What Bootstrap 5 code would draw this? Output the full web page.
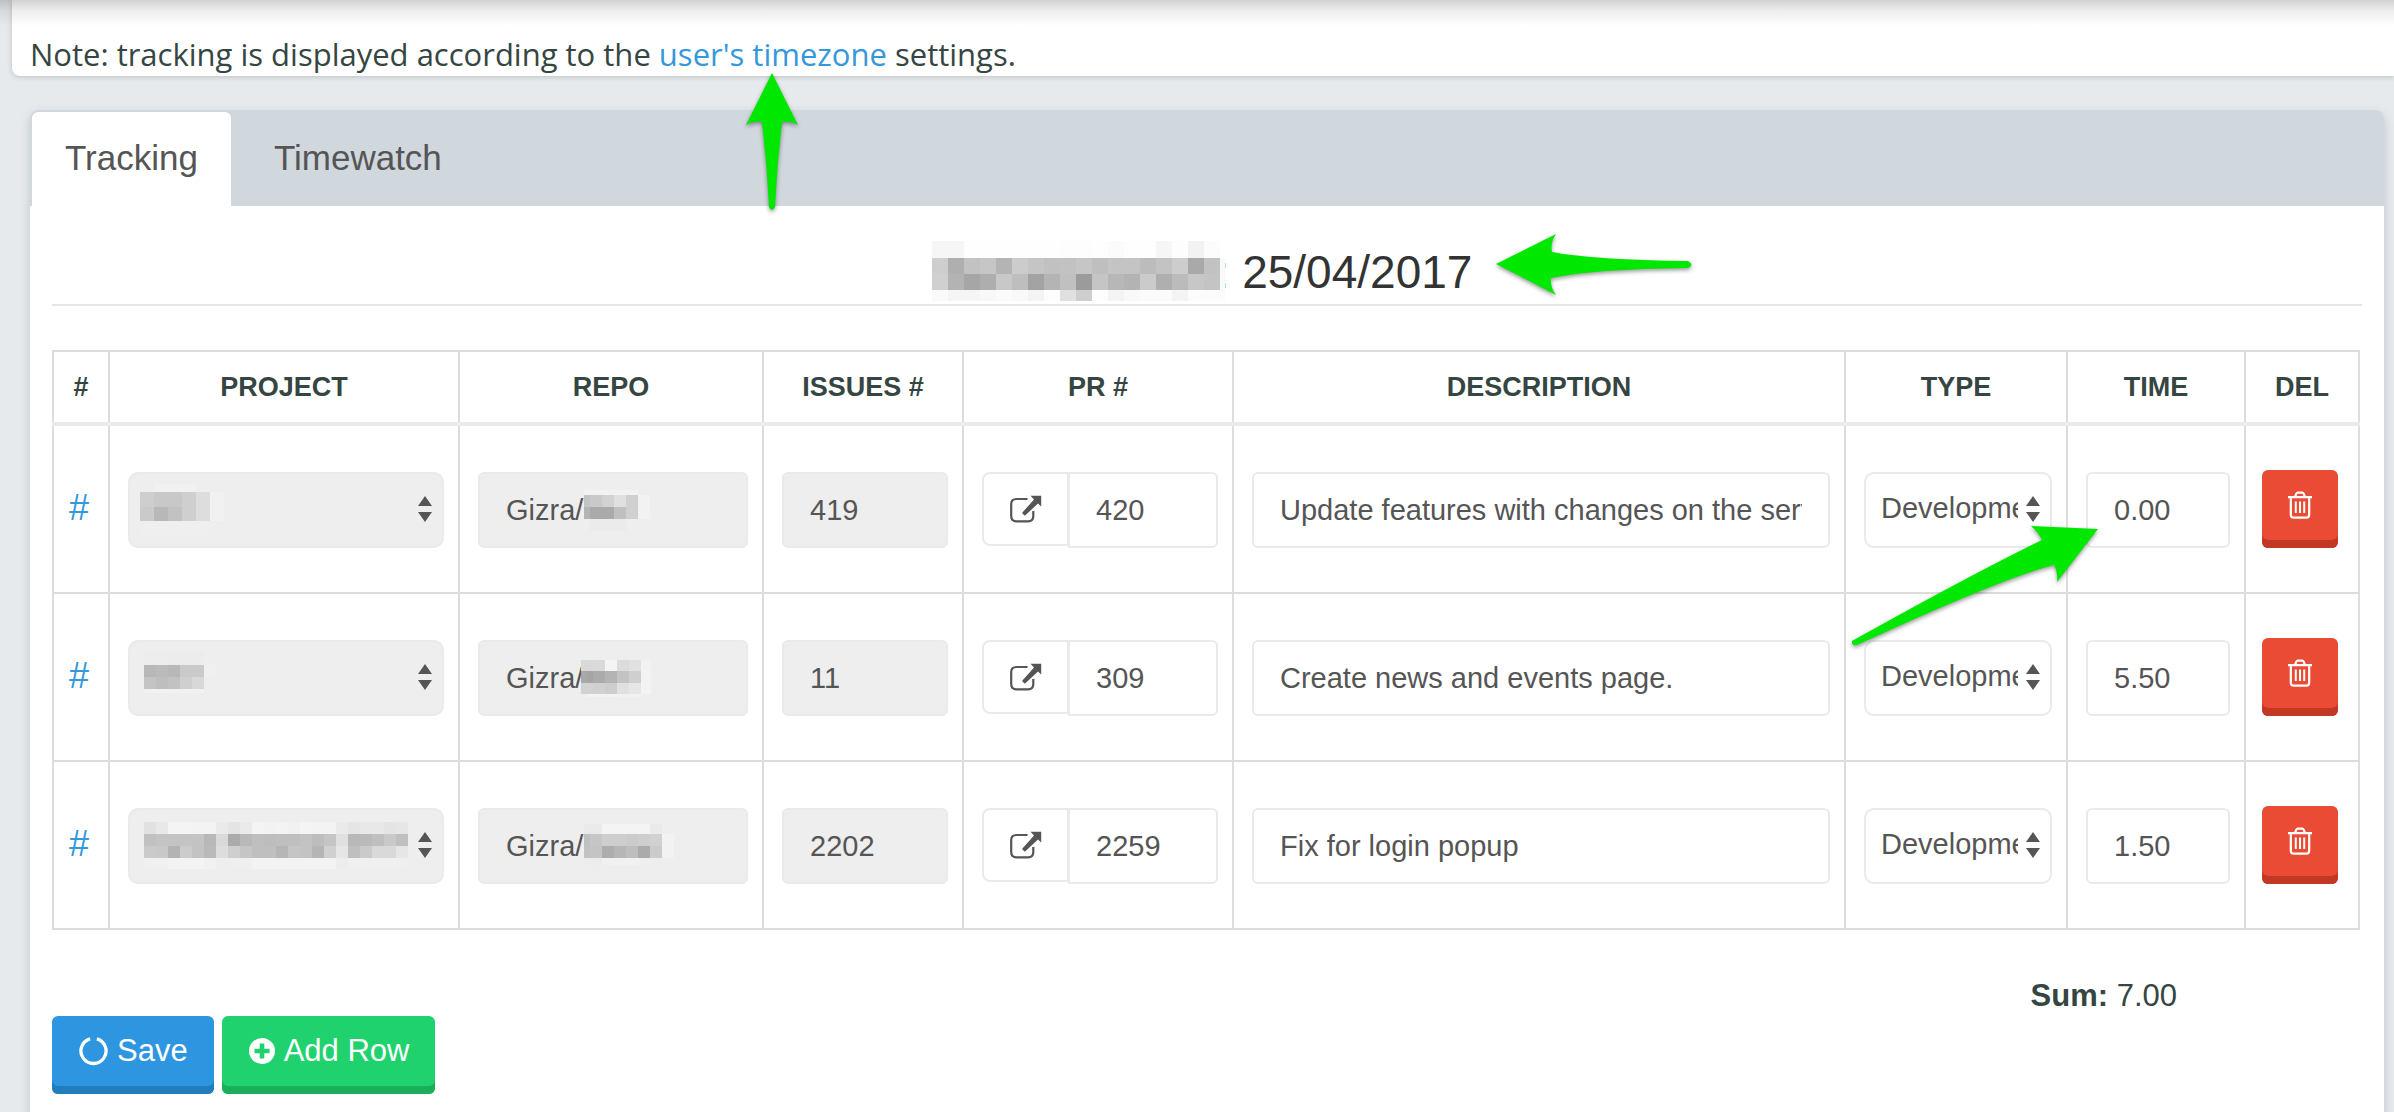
<!DOCTYPE html>
<html lang="en">
<head>
<meta charset="utf-8">
<meta name="viewport" content="width=device-width, initial-scale=1">
<title>Tracking</title>
<link rel="stylesheet" href="https://cdn.jsdelivr.net/npm/bootstrap@5.3.0/dist/css/bootstrap.min.css">
<style>
  :root { --line: #ddd; --soft: #e8eaec; --ink: #354642; }
  body { background: #e6eaed; color: var(--ink); font-family: "Liberation Sans", Arial, sans-serif; font-size: 31px; line-height: 32px; position: relative; overflow-x: hidden; }
  body::before { content: ""; position: absolute; inset: 0 0 auto; height: 26px; background: linear-gradient(rgba(0,0,0,.18), rgba(0,0,0,.07) 40%, transparent); pointer-events: none; z-index: 3; }
  a { color: #3498db; text-decoration: none; }
  .note-bar { background: #fff; margin-left: 12px; padding: 34px 18px 0; height: 76px; border-bottom-left-radius: 8px; box-shadow: 0 1px 5px rgba(60,70,80,.25); font-family: "Open Sans", sans-serif; line-height: 40px; }
  .note-bar p { margin: 0; }
  .panel { margin: 34px 10px 0 30px; border-radius: 8px 8px 0 0; background: #fff; box-shadow: 0 4px 10px rgba(90,105,130,.28); }
  .tab-strip { background: #d0d7dd; border: 0; border-radius: 8px 8px 0 0; padding: 2px 2px 0; gap: 10px; }
  .tab-strip .nav-link { border: 0; margin: 0; border-radius: 6px 6px 0 0; padding: 26px 33px 28px; font-size: 35px; line-height: 40px; color: #555; }
  .tab-strip .nav-link.active { background: #fff; color: #555; }
  .panel-main { padding: 40px 22px 22px; }
  .day-title { font-size: 46px; line-height: 52px; font-weight: 400; color: #333; border-bottom: 2px solid #e5e5e5; padding-bottom: 6px; margin-bottom: 44px; }
  .day-title .mosaic { position: relative; top: -5px; margin: -16px -8px -16px -10px; z-index: 1; }
  .mosaic { display: inline-block; vertical-align: middle; line-height: 0; }
  .mosaic svg { display: block; shape-rendering: crispEdges; }
  .field { position: relative; }
  .field .mosaic { position: absolute; pointer-events: none; }
  .at-p1 { left: 12px; top: 12px; } .at-p2 { left: 16px; top: 13px; } .at-p3 { left: 16px; top: 14px; }
  .at-r1 { left: 106px; top: 18px; } .at-r2 { left: 103px; top: 20px; } .at-r3 { left: 106px; top: 16px; }

  .track { table-layout: fixed; border-collapse: collapse; width: calc(100% - 2px); margin: 0; }
  .track th, .track td { border: 2px solid var(--line); }
  .track th { height: 73px; padding: 0; font-size: 27px; line-height: 30px; color: var(--ink); text-align: center; vertical-align: middle; text-transform: uppercase; }
  .track thead th { border-bottom: 4px solid var(--soft); }
  .track tbody td { padding: 46px 14px 44px 18px; vertical-align: top; }
  .track tbody td.cell-id { padding: 62px 4px 0 0; text-align: center; font-size: 36px; line-height: 40px; }
  .track tbody td.cell-del { padding: 44px 16px; }
  .track .form-control, .track .form-select { height: 76px; border: 2px solid var(--soft); border-radius: 6px; padding: 0 26px; font-size: 29px; line-height: 32px; color: #555; background-color: #fff; }
  .track .form-select { border-radius: 10px; padding: 0 32px 4px 15px; text-overflow: clip; background-size: 14px 26px; background-position: right 10px top 22px;
    background-image: url("data:image/svg+xml,%3Csvg xmlns='http://www.w3.org/2000/svg' viewBox='0 0 14 26'%3E%3Cpath fill='%23555' d='M7 0l7 10H0zM7 26l7-10H0z'/%3E%3C/svg%3E"); }
  .track .form-control:disabled, .track .form-select:disabled { background-color: #eee; opacity: 1; }
  .pr-group { align-items: flex-start; }
  .pr-group .btn { height: 74px; width: 87px; flex: none; padding: 0; border: 2px solid var(--soft); border-radius: 8px 0 0 8px; color: #555; background: #fff; }
  .pr-group .form-control { border-radius: 0 6px 6px 0; z-index: 6; }

  .btn-push { border: 0; border-radius: 6px; height: 78px; padding: 0 26px 8px 27px; color: #fff; font-size: 31px; line-height: 32px; display: inline-flex; align-items: center; gap: 9px; }
  .btn-push:hover { color: #fff; }
  .btn-save { background: #2e96e0; box-shadow: inset 0 -8px #227dbd; }
  .btn-add { background: #20d26e; box-shadow: inset 0 -8px #1baf5c; }
  .btn-del { background: #ea4b35; box-shadow: inset 0 -8px #c23824; width: 76px; padding: 0 0 8px; justify-content: center; }
  .btn-save:hover { background: #2e96e0; } .btn-add:hover { background: #20d26e; } .btn-del:hover { background: #ea4b35; }
  .sum-line { margin: 50px 0 4px; padding-right: 185px; text-align: right; }
  .pointer { position: absolute; z-index: 10; overflow: visible; pointer-events: none; fill: #00e800; filter: drop-shadow(0 2px 2px rgba(0,0,0,.4)); }
  .pointer-zone { left: 746px; top: 73px; }
  .pointer-date { left: 1496px; top: 234px; }
  .pointer-time { left: 1852px; top: 526px; }
</style>
</head>
<body class="min-vh-100 d-flex flex-column">

<svg width="0" height="0" class="position-absolute" aria-hidden="true">
  <symbol id="i-open" viewBox="0 0 32 28">
    <path d="M17.500 4H6.500Q1.200 4 1.200 9V21Q1.200 26.300 6.500 26.300H18Q23.300 26.300 23.300 21V16" fill="none" stroke="currentColor" stroke-width="2.200"/>
    <path d="M20.500 .8H31.200V11.500L28 8.500L14.800 20.800L12 18L24 4.500Z" fill="currentColor"/>
  </symbol>
  <symbol id="i-trash" viewBox="0 0 26 28">
    <g fill="none" stroke="currentColor" stroke-width="2.200">
      <path d="M1 6.200H25M8 6L9.300 2.600Q9.700 1.600 10.800 1.600H15.200Q16.300 1.600 16.700 2.600L18 6M3.800 6.500V23.500Q3.800 26.600 6.500 26.600H19.500Q22.200 26.600 22.200 23.500V6.500"/>
      <path d="M8.800 10.500V22M13 10.500V22M17.200 10.500V22" stroke-width="2"/>
    </g>
  </symbol>
</svg>

<header class="note-bar">
  <p>Note: tracking is displayed according to the <a href="#timezone">user's timezone</a> settings.</p>
</header>

<main class="panel flex-grow-1">
  <ul class="nav nav-tabs tab-strip">
    <li class="nav-item"><a class="nav-link active" href="#tracking" aria-current="page">Tracking</a></li>
    <li class="nav-item"><a class="nav-link" href="#timewatch">Timewatch</a></li>
  </ul>

  <form class="panel-main">
    <h1 class="day-title text-center"><span class="mosaic" data-cell="16" data-width="293" data-rows="17:f6 f6 fe fe fe fe fe fe fd fd fe fb fe fe f6 fd f2 fc ff|16:ce af c2 c6 b4 cc c5 c1 c2 c6 bf c4 c4 bc c3 cd a9 c2 f9|16:d0 b3 a6 ae c8 be a3 b4 c0 9b c5 b7 b3 cb af bb c7 c4 f9|11:fa f5 f5 f8 fb f9 f4 fd e0 ce fd f4 f9 fb fb f4 fc fc fb"></span>: 25/04/2017</h1>

    <table class="table track">
      <colgroup>
        <col style="width:56px"><col style="width:350px"><col style="width:304px"><col style="width:200px"><col style="width:270px"><col><col style="width:222px"><col style="width:178px"><col style="width:114px">
      </colgroup>
      <thead>
        <tr><th scope="col">#</th><th scope="col">Project</th><th scope="col">Repo</th><th scope="col">Issues #</th><th scope="col">PR #</th><th scope="col">Description</th><th scope="col">Type</th><th scope="col">Time</th><th scope="col">Del</th></tr>
      </thead>
      <tbody>
        <tr>
          <td class="cell-id"><a href="#row1">#</a></td>
          <td><div class="field"><select class="form-select" aria-label="Project" disabled><option></option></select><span class="mosaic at-p1" data-cell="14" data-width="84" data-rows="8:ee f1 f1 f1 ee ee|15:ce c8 c8 cf dd f1|14:ca b8 c2 cf dd f1|13:ef ef ef ef ef ee"></span></div></td>
          <td><div class="field"><input class="form-control" type="text" aria-label="Repo" value="Gizra/" disabled><span class="mosaic at-r1" data-cell="6" data-width="66" data-rows="5:f2 f2 f2 f2 f2 f2 f2 f2 f2 ee ee|12:c4 c9 c9 d2 d2 e0 e0 d0 d0 f2 f2|12:b4 aa aa aa aa c0 c0 d0 d0 f2 f2|12:ee eb eb eb eb eb eb ee ee ee ee"></span></div></td>
          <td><input class="form-control" type="text" aria-label="Issue number" value="419" disabled></td>
          <td><div class="input-group flex-nowrap pr-group"><button class="btn" type="button" aria-label="Open pull request"><svg width="32" height="28" aria-hidden="true"><use href="#i-open"/></svg></button><input class="form-control" type="text" aria-label="PR number" value="420"></div></td>
          <td><input class="form-control" type="text" aria-label="Description" value="Update features with changes on the server"></td>
          <td><select class="form-select" aria-label="Type"><option>Development</option></select></td>
          <td><input class="form-control" type="text" aria-label="Time" value="0.00"></td>
          <td class="cell-del"><button class="btn btn-push btn-del" type="button" aria-label="Delete row"><svg width="26" height="28" aria-hidden="true"><use href="#i-trash"/></svg></button></td>
        </tr>
        <tr>
          <td class="cell-id"><a href="#row2">#</a></td>
          <td><div class="field"><select class="form-select" aria-label="Project" disabled><option></option></select><span class="mosaic at-p2" data-cell="12" data-width="72" data-rows="12:ed ed ec ec ec ee|12:b8 bb b8 ca ca f0|12:c4 be c2 cf d8 ee|4:f1 f1 f1 f1 f1 ee"></span></div></td>
          <td><div class="field"><input class="form-control" type="text" aria-label="Repo" value="Gizra/" disabled><span class="mosaic at-r2" data-cell="6" data-width="70" data-rows="11:d9 d9 da da f4 f4 dc dc e1 e1 f2 f2|12:a8 a5 ab ab b4 b4 c3 c3 cf cf f3 f3|11:d2 d2 d0 d0 cd cd e0 e0 e6 e6 f3 f3|3:ef f3 f3 f3 f3 f3 f1 f1 f1 f1 ee ee"></span></div></td>
          <td><input class="form-control" type="text" aria-label="Issue number" value="11" disabled></td>
          <td><div class="input-group flex-nowrap pr-group"><button class="btn" type="button" aria-label="Open pull request"><svg width="32" height="28" aria-hidden="true"><use href="#i-open"/></svg></button><input class="form-control" type="text" aria-label="PR number" value="309"></div></td>
          <td><input class="form-control" type="text" aria-label="Description" value="Create news and events page."></td>
          <td><select class="form-select" aria-label="Type"><option>Development</option></select></td>
          <td><input class="form-control" type="text" aria-label="Time" value="5.50"></td>
          <td class="cell-del"><button class="btn btn-push btn-del" type="button" aria-label="Delete row"><svg width="26" height="28" aria-hidden="true"><use href="#i-trash"/></svg></button></td>
        </tr>
        <tr>
          <td class="cell-id"><a href="#row3">#</a></td>
          <td><div class="field"><select class="form-select" aria-label="Project" disabled><option></option></select><span class="mosaic at-p3" data-cell="12" data-width="264" data-rows="12:e1 e8 f4 f4 f3 f3 ea e4 ea f4 f2 f3 f1 f4 f3 f3 ea e5 e8 e8 e4 e6|12:c1 c4 c4 c4 c4 b8 d9 ab b9 bf bd bf bf c2 bd c5 e0 b8 ba bf c9 c0|12:ca c8 b3 cc c3 ba dd cf c5 bf bf b6 c5 c3 b5 d0 e6 bf ca d9 d9 e6|11:f0 f0 f3 f3 f3 f1 ee ef ef f3 f3 f3 f3 f3 f3 f3 ed f0 f0 f0 f0 ef"></span></div></td>
          <td><div class="field"><input class="form-control" type="text" aria-label="Repo" value="Gizra/" disabled><span class="mosaic at-r3" data-cell="6" data-width="90" data-rows="10:ea ea ea f4 f4 f4 f4 f4 f4 f4 f4 ea ea ee ee|12:c0 c6 c6 ce ce ce ce cb cb ce ce d1 d1 f2 f2|12:c2 c4 c4 ad ad b6 b6 be be ab ab cb cb f2 f2|7:ed ec ec f1 f1 f1 f1 f1 f1 ef ef ee ee ee ee"></span></div></td>
          <td><input class="form-control" type="text" aria-label="Issue number" value="2202" disabled></td>
          <td><div class="input-group flex-nowrap pr-group"><button class="btn" type="button" aria-label="Open pull request"><svg width="32" height="28" aria-hidden="true"><use href="#i-open"/></svg></button><input class="form-control" type="text" aria-label="PR number" value="2259"></div></td>
          <td><input class="form-control" type="text" aria-label="Description" value="Fix for login popup"></td>
          <td><select class="form-select" aria-label="Type"><option>Development</option></select></td>
          <td><input class="form-control" type="text" aria-label="Time" value="1.50"></td>
          <td class="cell-del"><button class="btn btn-push btn-del" type="button" aria-label="Delete row"><svg width="26" height="28" aria-hidden="true"><use href="#i-trash"/></svg></button></td>
        </tr>
      </tbody>
    </table>

    <p class="sum-line"><strong>Sum:</strong> 7.00</p>

    <div class="d-flex gap-2">
      <button class="btn btn-push btn-save" type="button"><svg width="29" height="30" viewBox="0 0 30 30" aria-hidden="true"><path d="M11.500 2.400A13 13 0 1 0 18.500 2.400" fill="none" stroke="#fff" stroke-width="3.400"/></svg>Save</button>
      <button class="btn btn-push btn-add" type="button"><svg width="26" height="26" viewBox="0 0 26 26" aria-hidden="true"><circle cx="13" cy="13" r="13" fill="#fff"/><path d="M13 5.500V20.500M5.500 13H20.500" stroke="#20d26e" stroke-width="4.600"/></svg>Add Row</button>
    </div>
  </form>
</main>

<svg class="pointer pointer-zone" width="52" height="138" aria-hidden="true"><path d="M26 0L52 52Q44 47 36 49Q31 92 29 134Q26 140 23 134Q21 92 16 49Q8 47 0 52Z"/></svg>
<svg class="pointer pointer-date" width="196" height="62" aria-hidden="true"><path d="M0 30L60 0Q54 9 56 18Q98 26 192 27Q199 31 192 34Q98 35 55 44Q54 53 60 61Z"/></svg>
<svg class="pointer pointer-time" width="246" height="120" aria-hidden="true"><path d="M246 3L205 56Q206 46 202 39Q150 52 5 119Q-1 120 0 115Q120 48 190 14Q186 6 179 0Z"/></svg>

<script src="https://cdn.jsdelivr.net/npm/bootstrap@5.3.0/dist/js/bootstrap.bundle.min.js"></script>
<script>
  // Paint each redaction mosaic from its rows of "height:grey grey grey ..."
  document.querySelectorAll('.mosaic').forEach(function (el) {
    var cell = +el.dataset.cell, y = 0, out = '';
    el.dataset.rows.split('|').forEach(function (row) {
      var part = row.split(':'), h = +part[0];
      part[1].split(' ').forEach(function (g, i) {
        out += '<rect x="' + i * cell + '" y="' + y + '" width="' + cell + '" height="' + h + '" fill="#' + g + g + g + '"/>';
      });
      y += h;
    });
    el.innerHTML = '<svg width="' + el.dataset.width + '" height="' + y + '" aria-hidden="true">' + out + '</svg>';
  });
</script>
</body>
</html>
